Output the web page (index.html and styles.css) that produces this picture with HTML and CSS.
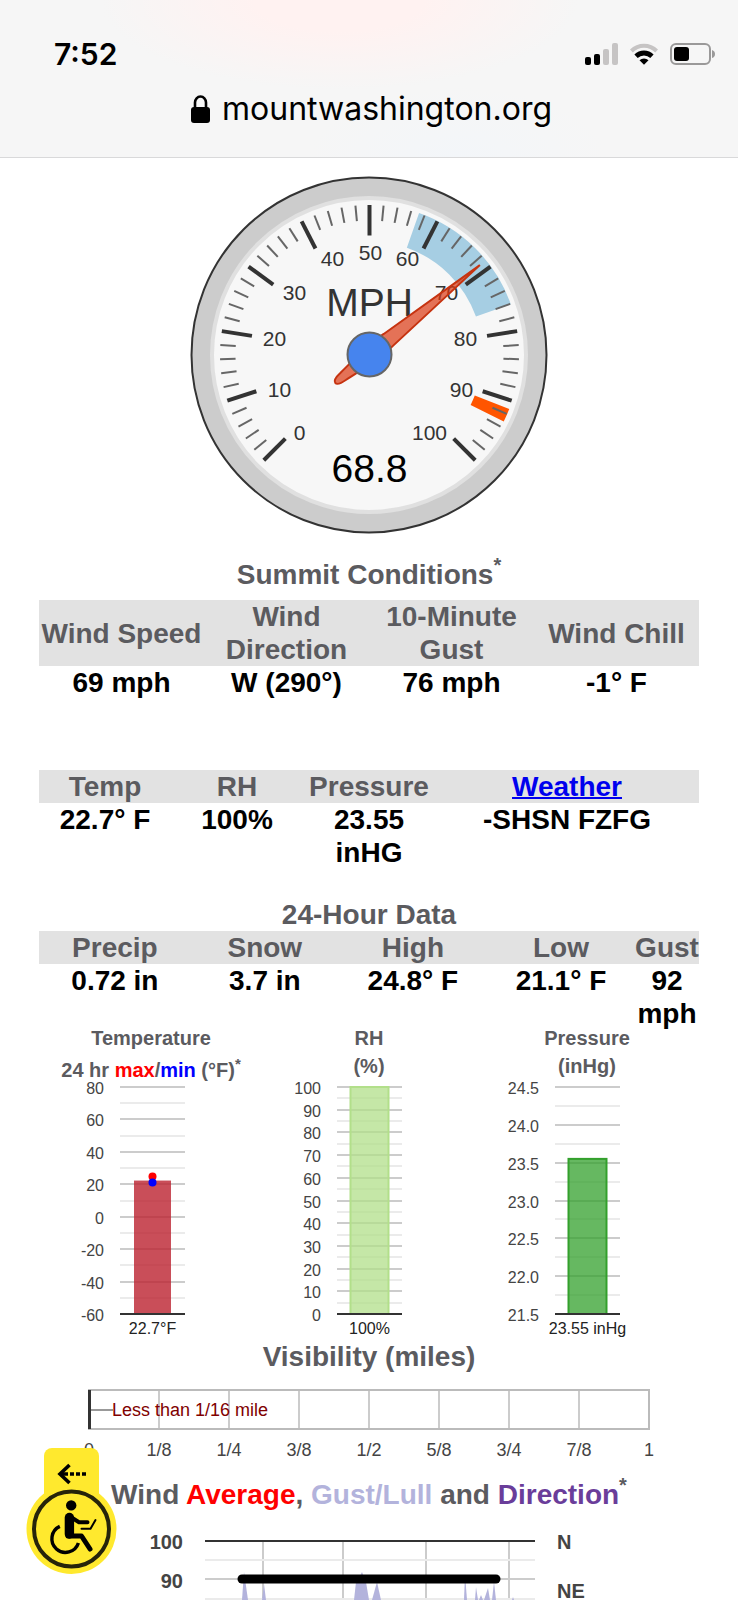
FILE: index.html
```html
<!DOCTYPE html>
<html lang="en">
<head>
<meta charset="utf-8">
<meta name="viewport" content="width=device-width, initial-scale=1">
<title>Mount Washington Summit Conditions</title>
<link rel="stylesheet" href="styles.css">
</head>
<body>
<header class="browser">
  <div class="status">
    <span class="time">7:52</span>
    <div class="status-icons">
      <svg width="33" height="22" viewBox="0 0 33 22" aria-hidden="true">
        <rect x="0" y="14" width="6" height="8" rx="2"/>
        <rect x="9" y="11" width="6" height="11" rx="2"/>
        <rect x="18" y="6" width="6" height="16" rx="2" fill="#c6c4c4"/>
        <rect x="27" y="0" width="6" height="22" rx="2" fill="#c6c4c4"/>
      </svg>
      <svg width="30" height="22" viewBox="0 0 30 22" aria-hidden="true">
        <path d="M1 6.5 A20 20 0 0 1 29 6.5 L26.2 9.6 A15.6 15.6 0 0 0 3.8 9.6 Z" fill="#c6c4c4"/>
        <path d="M5.4 11.6 A13.2 13.2 0 0 1 24.6 11.6 L21.3 15.1 A8.8 8.8 0 0 0 8.7 15.1 Z"/>
        <path d="M10.5 17.2 A6.5 6.5 0 0 1 19.5 17.2 L15 21.8 Z"/>
      </svg>
      <svg width="45" height="22" viewBox="0 0 45 22" aria-hidden="true">
        <rect x="1" y="1" width="39" height="20" rx="5" fill="none" stroke="#9a9999" stroke-width="2"/>
        <rect x="4" y="4" width="15" height="14" rx="3"/>
        <path d="M42 7 Q45 8 45 11 Q45 14 42 15 Z" fill="#9a9999"/>
      </svg>
    </div>
  </div>
  <div class="address">
    <svg width="19" height="28" viewBox="0 0 19 28" aria-hidden="true">
      <path d="M4 13 V7.5 A5.5 6 0 0 1 15 7.5 V13" fill="none" stroke="#000" stroke-width="2.6"/>
      <rect x="0" y="12" width="19" height="16" rx="3"/>
    </svg>
    <span>mountwashington.org</span>
  </div>
</header>

<main class="page">
  <svg class="gauge" id="gauge" width="358" height="358" viewBox="-179 -179 358 358" role="img" aria-label="Wind speed gauge"></svg>

  <h2 class="title summit">Summit Conditions<sup>*</sup></h2>
  <table class="data wind">
    <thead><tr><th>Wind Speed</th><th>Wind Direction</th><th>10-Minute Gust</th><th>Wind Chill</th></tr></thead>
    <tbody><tr><td>69 mph</td><td>W (290°)</td><td>76 mph</td><td>-1° F</td></tr></tbody>
  </table>
  <table class="data weather">
    <colgroup><col class="fifth"><col class="fifth"><col class="fifth"><col></colgroup>
    <thead><tr><th>Temp</th><th>RH</th><th>Pressure</th><th><a href="#weather">Weather</a></th></tr></thead>
    <tbody><tr><td>22.7° F</td><td>100%</td><td>23.55<br>inHG</td><td>-SHSN FZFG</td></tr></tbody>
  </table>
  <h2 class="title">24-Hour Data</h2>
  <table class="data daily">
    <colgroup><col class="first"><col><col><col><col class="narrow"></colgroup>
    <thead><tr><th>Precip</th><th>Snow</th><th>High</th><th>Low</th><th>Gust</th></tr></thead>
    <tbody><tr><td>0.72 in</td><td>3.7 in</td><td>24.8° F</td><td>21.1° F</td><td>92 mph</td></tr></tbody>
  </table>

  <section class="bars">
    <figure class="bar">
      <figcaption><span>Temperature</span><span class="lowered">24 hr <b class="red">max</b>/<b class="blue">min</b> (°F)<sup>*</sup></span></figcaption>
      <svg id="temp" width="218" height="258" viewBox="0 0 218 258"></svg>
    </figure>
    <figure class="bar">
      <figcaption><span>RH</span><span>(%)</span></figcaption>
      <svg id="rh" width="218" height="258" viewBox="0 0 218 258"></svg>
    </figure>
    <figure class="bar">
      <figcaption><span>Pressure</span><span>(inHg)</span></figcaption>
      <svg id="pressure" width="218" height="258" viewBox="0 0 218 258"></svg>
    </figure>
  </section>

  <h2 class="title">Visibility (miles)</h2>
  <svg class="wide" id="visibility" viewBox="0 0 660 84"></svg>

  <h2 class="title history">Wind <span class="red">Average</span>, <span class="lilac">Gust/Lull</span> and <span class="purple">Direction</span><sup>*</sup></h2>
  <svg class="wide trend" id="trend" viewBox="0 0 660 70"></svg>
</main>

<button class="access" type="button" aria-label="Accessibility menu">
  <svg width="91" height="127" viewBox="0 0 91 127" aria-hidden="true">
    <rect x="18" y="0" width="55" height="80" rx="8" fill="#ffe92e"/>
    <circle cx="45.5" cy="81" r="45" fill="#ffe92e"/>
    <circle cx="45.5" cy="81" r="37.5" fill="none" stroke="#26240a" stroke-width="4"/>
    <g fill="none" stroke="#000">
      <path d="M43.5 17 L34 26 L43.5 35" stroke-width="3.6"/>
      <path d="M35 26 H60" stroke-width="3.6" stroke-dasharray="7 2 4 2 4 2"/>
      <path d="M33.8 78.4 A13.6 13.6 0 1 0 52.4 95" stroke-width="3.4"/>
      <path d="M43.4 69.5 V86" stroke-width="9.4" stroke-linecap="round"/>
      <path d="M42 88 H55.5 L64 101" stroke-width="5" stroke-linecap="round" stroke-linejoin="round"/>
      <path d="M44 68.5 L53 74.2 H61.5" stroke-width="4" stroke-linecap="round" stroke-linejoin="round"/>
      <path d="M55.5 80.7 H64.5 L69.5 72" stroke-width="2" stroke-linecap="round" stroke-linejoin="round"/>
    </g>
    <circle cx="45.2" cy="57.4" r="5.2"/>
  </svg>
</button>
<script src="charts.js"></script>
</body>
</html>
```
FILE: styles.css
```css
* { box-sizing: border-box; }
body {
  margin: 0;
  background: #fff;
  color: #000;
  font-family: "Liberation Sans", Arial, sans-serif;
}
.browser {
  padding: 37px 23px 28px 54px;
  background:
    radial-gradient(ellipse 240px 90px at 46% 0, #fff2f1 0, #fff2f1 35%, rgba(255, 242, 241, 0) 100%),
    radial-gradient(ellipse 150px 70px at 62% 100%, #f3f6f9 0, rgba(243, 246, 249, 0) 100%),
    #f6f6f6;
  border-bottom: 1px solid #d9d9da;
  font-family: Inter, "Liberation Sans", sans-serif;
}
.status, .status-icons, .address { display: flex; align-items: center; }
.status { justify-content: space-between; }
.status-icons { gap: 11px; }
.time { font-size: 30px; line-height: 34px; font-weight: 600; }
.address {
  justify-content: center;
  gap: 12px;
  margin: 18px 26px 0 0;
  font-size: 32px;
  line-height: 40px;
}
.page { padding: 18px 39px 0; }
.gauge { display: block; margin: 0 auto 24px; }
svg text { font-family: "Liberation Sans", Arial, sans-serif; }
.title {
  margin: 0;
  color: #5b5b5f;
  font-size: 28px;
  line-height: 33px;
  font-weight: 700;
  text-align: center;
}
sup { font-size: 20px; line-height: 0; vertical-align: 12px; }
.summit { margin-bottom: 9px; }
.data {
  width: 100%;
  border-collapse: collapse;
  table-layout: fixed;
  font-size: 28px;
  line-height: 33px;
  font-weight: 700;
  text-align: center;
}
.data th { padding: 0; background: #e2e2e2; color: #5b5b5f; }
.data td { padding: 0; vertical-align: top; }
.data a { color: #0000ee; text-decoration-thickness: 2px; }
.wind { margin-bottom: 71px; }
.weather { margin-bottom: 29px; }
.fifth { width: 20%; }
.first { width: 23%; }
.narrow { width: 64px; }
.bars { display: grid; grid-template-columns: repeat(3, 1fr); margin: -2px 3px 2px; }
.bar {
  display: flex;
  flex-direction: column;
  align-items: center;
  justify-content: space-between;
  margin: 0;
}
.bar figcaption {
  display: flex;
  flex-direction: column;
  align-items: center;
  gap: 8px;
  color: #5b5b5f;
  font-size: 20px;
  line-height: 20px;
  font-weight: 700;
}
.bar sup { font-size: 15px; vertical-align: 8px; }
.lowered { padding-top: 4px; }
.bar svg { display: block; overflow: visible; }
.red { color: #f00; }
.blue { color: #00f; }
.lilac { color: #b3b3dc; }
.purple { color: #6a3d9a; }
.wide { display: block; width: 100%; margin-top: 7px; }
.history { margin-top: 14px; }
.trend { margin-top: 19px; }
.access {
  position: fixed;
  left: 26px;
  bottom: 25px;
  padding: 0;
  border: 0;
  background: none;
}
.access svg { display: block; }
```
FILE: charts.js
```js
const NS = "http://www.w3.org/2000/svg";

function add(parent, name, attrs, text) {
  const el = document.createElementNS(NS, name);
  for (const key in attrs) el.setAttribute(key, attrs[key]);
  if (text !== undefined) el.textContent = text;
  parent.appendChild(el);
  return el;
}

function polar(radius, degrees) {
  const a = degrees * Math.PI / 180;
  return [radius * Math.sin(a), -radius * Math.cos(a)];
}

function band(svg, from, to, fill) {
  const p = [polar(150, from), polar(150, to), polar(113, to), polar(113, from)];
  add(svg, "path", {
    d: `M${p[0]} A150 150 0 0 1 ${p[1]} L${p[2]} A113 113 0 0 0 ${p[3]} Z`, fill
  });
}

function drawGauge() {
  const root = document.getElementById("gauge");
  add(root, "circle", { r: 177.5, fill: "#ccc", stroke: "#333", "stroke-width": 2 });
  add(root, "circle", { r: 157, fill: "#f7f7f7", stroke: "#e0e0e0", "stroke-width": 4 });
  const svg = add(root, "g", { transform: "translate(0.5 -0.5)" });
  band(svg, 19.3, 70.4, "#a6cee3");
  band(svg, 111.3, 116.5, "#ff5500");
  for (let i = 0; i <= 50; i++) {
    const major = i % 5 === 0;
    const angle = -135 + i * 5.4;
    const [x1, y1] = polar(149.5, angle);
    const [x2, y2] = polar(major ? 119 : 134, angle);
    add(svg, "line", { x1, y1, x2, y2, stroke: major ? "#333" : "#666", "stroke-width": major ? 4 : 2 });
  }
  const labels = [[-70, 78], [-90, 35], [-95, -16], [-75, -62], [-37, -96], [1, -102],
    [38, -96], [77, -62], [96, -16], [92, 35], [60, 78]];
  labels.forEach(([x, y], i) => add(svg, "text", {
    x, y: y + 7, "text-anchor": "middle", "font-size": 21, fill: "#333"
  }, i * 10));
  add(svg, "text", { x: 0, y: -39, "text-anchor": "middle", "font-size": 39, fill: "#333" }, "MPH");
  add(svg, "text", { x: 0, y: 127, "text-anchor": "middle", "font-size": 39, fill: "#000" }, "68.8");
  add(svg, "path", {
    d: "M0 -142 L8 -24 C10 -6 7 14 5 34 C4 48 -3 48 -4 34 C-6 14 -9 -6 -7 -24 Z",
    transform: "rotate(51)", fill: "#dc3912", "fill-opacity": 0.7, stroke: "#c63310", "stroke-width": 2
  });
  add(svg, "circle", { r: 22, fill: "#4684ee", stroke: "#666", "stroke-width": 2 });
}

function drawBar(id, o) {
  const svg = document.getElementById(id);
  const top = 7, bottom = 234, width = 65;
  const left = 77 + o.shift;
  const center = left + width / 2;
  const y = v => bottom - (v - o.min) / (o.max - o.min) * (bottom - top);
  const steps = Math.round((o.max - o.min) / o.step);
  for (let i = 0; i <= steps; i++) {
    const value = o.min + i * o.step;
    const line = Math.round(y(value));
    if (i > 0) {
      const minor = Math.round(y(value - o.step / 2));
      add(svg, "rect", { x: left, y: minor - 1, width, height: 2, fill: "#ebebeb" });
      add(svg, "rect", { x: left, y: line - 1, width, height: 2, fill: "#ccc" });
    }
    add(svg, "text", { x: left - 16, y: line + 7, "text-anchor": "end", "font-size": 16, fill: "#444" },
      value.toFixed(o.digits));
  }
  const h = y(o.value);
  add(svg, "rect", {
    x: center - o.width / 2, y: h, width: o.width, height: bottom - h, fill: o.fill,
    "fill-opacity": o.opacity, stroke: o.stroke || "none", "stroke-width": 2
  });
  add(svg, "rect", { x: left, y: bottom - 1, width, height: 2, fill: "#333" });
  (o.dots || []).forEach(([v, fill]) => add(svg, "circle", { cx: center, cy: y(v), r: 4, fill }));
  add(svg, "text", { x: center, y: 254, "text-anchor": "middle", "font-size": 16, fill: "#222" }, o.label);
}

function drawVisibility() {
  const svg = document.getElementById("visibility");
  const names = ["0", "1/8", "1/4", "3/8", "1/2", "5/8", "3/4", "7/8", "1"];
  names.forEach((name, i) => {
    const x = 50 + i * 70;
    add(svg, "rect", { x: x - 1, y: 10, width: 2, height: 38, fill: "#ccc" });
    add(svg, "text", { x, y: 76, "text-anchor": "middle", "font-size": 18, fill: "#444" }, name);
  });
  add(svg, "rect", { x: 50, y: 10, width: 560, height: 39, fill: "none", stroke: "#bbb", "stroke-width": 2 });
  add(svg, "rect", { x: 49, y: 10, width: 3, height: 39, fill: "#333" });
  add(svg, "rect", { x: 52, y: 29, width: 22, height: 2, fill: "#999" });
  add(svg, "text", { x: 73, y: 36, "font-size": 18, fill: "#800000" }, "Less than 1/16 mile");
}

function drawTrend() {
  const svg = document.getElementById("trend");
  [224, 304, 387, 470].forEach(x => add(svg, "rect", { x: x - 1, y: 11, width: 2, height: 59, fill: "#ccc" }));
  [[30, "#ebebeb"], [49, "#ccc"], [69, "#ebebeb"]].forEach(([y, fill]) =>
    add(svg, "rect", { x: 166, y: y - 1, width: 330, height: 2, fill }));
  add(svg, "rect", { x: 166, y: 10, width: 330, height: 2, fill: "#333" });
  const gusts = [[203, 42, 209, 205], [223, 54, 227, 225], [333, 52, 342, 338], [425, 44, 428, 426],
    [436, 57, 439, 437], [440, 65, 444, 442], [445, 58, 451, 449], [453, 52, 457, 455], [473, 67, 475, 474]];
  gusts.forEach(([a, peak, b, mid]) =>
    add(svg, "path", { d: `M${a} 70 L${mid} ${peak} L${b} 70 Z`, fill: "#b3b3dc" }));
  add(svg, "path", { d: "M315 70 L317 52 L321 46 L323 42 L327 52 L330 70 Z", fill: "#b3b3dc" });
  add(svg, "path", { d: "M203 49 H457", stroke: "#000", "stroke-width": 9, "stroke-linecap": "round" });
  [[144, 19, "end", "100"], [144, 58, "end", "90"], [518, 19, "start", "N"], [518, 68, "start", "NE"]]
    .forEach(([x, y, anchor, label]) => add(svg, "text", {
      x, y, "text-anchor": anchor, "font-size": 20, "font-weight": 700, fill: "#444"
    }, label));
}

drawGauge();
drawBar("temp", {
  min: -60, max: 80, step: 20, digits: 0, value: 22.3, width: 37, fill: "#bb2230", opacity: 0.8,
  dots: [[24.8, "#f00"], [21.1, "#00f"]], label: "22.7°F", shift: 1
});
drawBar("rh", {
  min: 0, max: 100, step: 10, digits: 0, value: 100, width: 38, fill: "#b2df8a", opacity: 0.75,
  stroke: "#b2df8a", label: "100%", shift: 0
});
drawBar("pressure", {
  min: 21.5, max: 24.5, step: 0.5, digits: 1, value: 23.55, width: 38, fill: "#33a02c", opacity: 0.75,
  stroke: "#33a02c", label: "23.55 inHg", shift: 0
});
drawVisibility();
drawTrend();
```
